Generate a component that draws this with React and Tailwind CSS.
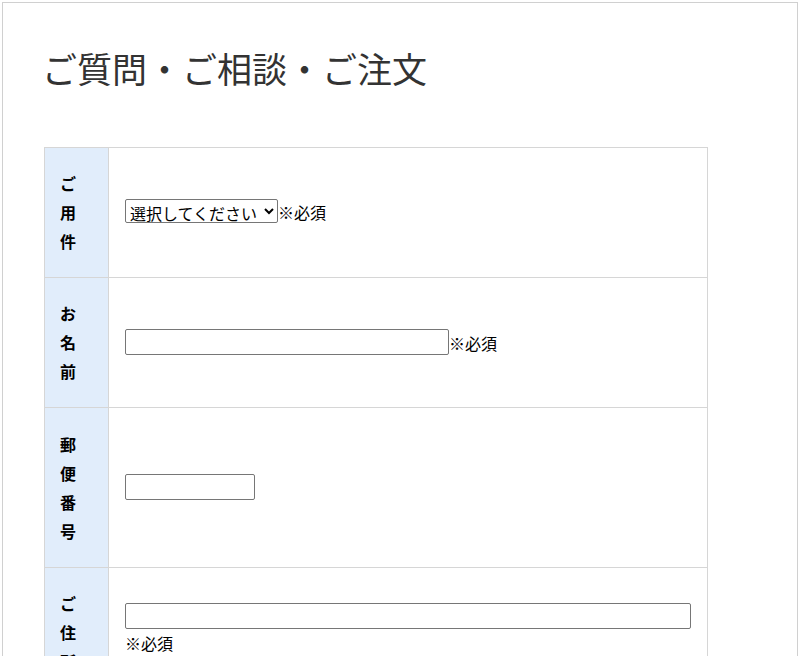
import React from "react";

const font = { fontFamily: '"Noto Sans CJK JP", "Noto Sans", sans-serif' };

const Label = ({ text }) => (
  <th className="w-[64px] bg-[#e1edfb] border border-[#d6d6d6] pl-[15px] pr-2 py-[21px] align-middle text-left font-bold text-[16px] text-black">
    {text.split("").map((c, i) => (
      <span key={i} className="block leading-[29px]">
        {c}
      </span>
    ))}
  </th>
);

const inputClass =
  "h-[26px] border border-[#767676] rounded-[2px] bg-white px-[2px] text-[16px] align-middle";

const App = () => {
  return (
    <div
      className="mx-[2px] mt-[2px] border border-[#d0d0d0] bg-white pl-[41px] pt-[41px] pb-10 min-h-[700px]"
      style={font}
    >
      <h1 className="text-[35px] font-normal leading-[48px] text-[#333] -ml-[2px]">
        ご質問・ご相談・ご注文
      </h1>

      <table className="mt-[55px] w-[664px] border-collapse text-[16px] text-black">
        <tbody>
          <tr className="h-[130px]">
            <Label text="ご用件" />
            <td className="border border-[#d6d6d6] px-4 pb-[5px] align-middle">
              <select className="h-[24px] w-[153px] border border-[#767676] rounded-[2px] bg-white text-[16px] leading-[20px] align-middle">
                <option>選択してください</option>
                <option>ご質問</option>
                <option>ご相談</option>
                <option>ご注文</option>
              </select>
              <span className="align-middle">※必須</span>
            </td>
          </tr>
          <tr className="h-[130px]">
            <Label text="お名前" />
            <td className="border border-[#d6d6d6] px-4 pb-[2px] align-middle">
              <input type="text" className={`${inputClass} w-[324px]`} />
              <span className="align-middle">※必須</span>
            </td>
          </tr>
          <tr className="h-[160px]">
            <Label text="郵便番号" />
            <td className="border border-[#d6d6d6] px-4 pb-[2px] align-middle">
              <input type="text" className={`${inputClass} w-[130px]`} />
            </td>
          </tr>
          <tr className="h-[130px]">
            <Label text="ご住所" />
            <td className="border border-[#d6d6d6] px-4 pb-[8px] align-middle">
              <input type="text" className={`${inputClass} w-[566px] block`} />
              <div className="mt-[2px] leading-[24px]">※必須</div>
            </td>
          </tr>
          <tr className="h-[130px]">
            <Label text="電話番号" />
            <td className="border border-[#d6d6d6] px-4 align-middle">
              <input type="text" className={`${inputClass} w-[200px]`} />
              <span className="align-middle">※必須</span>
            </td>
          </tr>
        </tbody>
      </table>
    </div>
  );
};

export default App;
